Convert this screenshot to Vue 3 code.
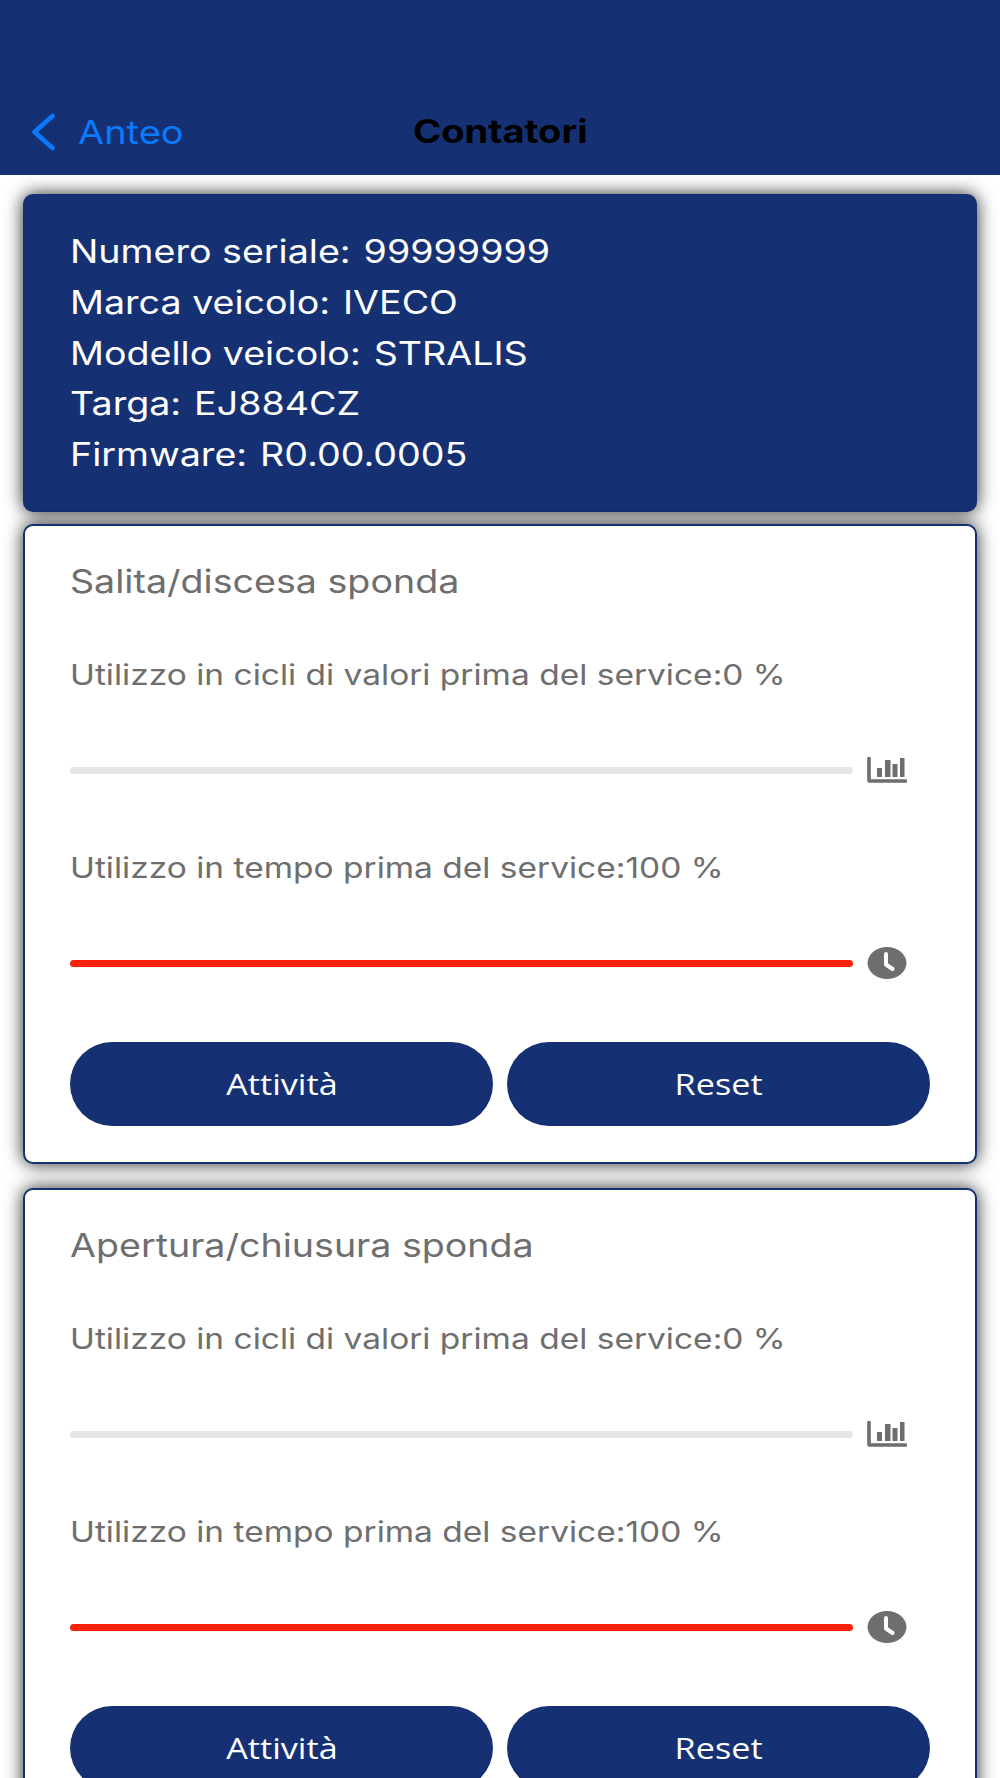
<script setup>
const info = [
  ["Numero seriale:", "99999999"],
  ["Marca veicolo:", "IVECO"],
  ["Modello veicolo:", "STRALIS"],
  ["Targa:", "EJ884CZ"],
  ["Firmware:", "R0.00.0005"],
];

const groups = ["Salita/discesa sponda", "Apertura/chiusura sponda"];
</script>

<template>
  <div class="page">
    <header class="topbar">
      <div class="back">
        <svg class="chevron" width="26" height="38" viewBox="0 0 26 38">
          <path d="M22.5 3 L4.5 19 L22.5 35" fill="none" stroke="#0a7aff" stroke-width="4.6" stroke-linecap="round" stroke-linejoin="round" />
        </svg>
        <span class="wide">Anteo</span>
      </div>
      <div class="title">Contatori</div>
    </header>

    <main class="content">
      <section class="info">
        <div v-for="row in info" :key="row[0]" class="info-row wide">
          <span>{{ row[0] }}</span>
          <span>{{ row[1] }}</span>
        </div>
      </section>

      <section v-for="(name, i) in groups" :key="name" class="card" :class="{ first: i === 0 }">
        <h2 class="wide">{{ name }}</h2>

        <p class="label wide">Utilizzo in cicli di valori prima del service:0 %</p>
        <div class="meter">
          <div class="track"></div>
          <svg width="40" height="26" viewBox="0 0 40 26">
            <path d="M2 1.5 V24 H38.5" fill="none" stroke="#6e6e6e" stroke-width="3.6" stroke-linecap="round" stroke-linejoin="round" />
            <rect x="10" y="11" width="5" height="9" fill="#6e6e6e" />
            <rect x="18" y="3" width="5.5" height="17" fill="#6e6e6e" />
            <rect x="25.5" y="7" width="5" height="13" fill="#6e6e6e" />
            <rect x="33" y="1" width="4.5" height="19" fill="#6e6e6e" />
          </svg>
        </div>

        <p class="label second wide">Utilizzo in tempo prima del service:100 %</p>
        <div class="meter">
          <div class="track full"></div>
          <svg width="40" height="32" viewBox="0 0 40 32">
            <ellipse cx="20" cy="16" rx="19.5" ry="16" fill="#6e6e6e" />
            <path d="M19 7 V17.5 L25.5 22" fill="none" stroke="#fff" stroke-width="4" stroke-linecap="round" stroke-linejoin="round" />
          </svg>
        </div>

        <div class="actions">
          <button><span class="wide-btn">Attività</span></button>
          <button><span class="wide-btn">Reset</span></button>
        </div>
      </section>
    </main>
  </div>
</template>

<style scoped>
.page {
  height: 1778px;
  overflow: hidden;
  background: #fff;
  font-family: Inter, "Liberation Sans", sans-serif;
}

/* the whole screenshot is stretched sideways, so the text is too */
.wide {
  transform: scaleX(1.175);
  transform-origin: left center;
}

.wide-btn {
  display: inline-block;
  transform: scaleX(1.14);
  position: relative;
  top: -1px;
}

.topbar {
  height: 175px;
  box-sizing: border-box;
  padding-top: 113px;
  background: #153174;
  display: flex;
  position: relative;
  justify-content: center;
}

.back {
  position: absolute;
  left: 30px;
  top: 113px;
  display: flex;
  align-items: center;
  gap: 22px;
  color: #0a7aff;
  font-size: 33px;
  line-height: 38px;
}

.back .wide {
  display: inline-block;
  transform: scaleX(1.15);
}

.title {
  color: #000;
  font-size: 32px;
  line-height: 38px;
  font-weight: 700;
  transform: scaleX(1.19);
}

.content {
  padding: 19px 23px 0;
}

.info {
  height: 318px;
  box-sizing: border-box;
  padding: 33px 47px 0;
  background: #153174;
  border-radius: 10px;
  box-shadow: 0 0 18px rgba(0, 0, 0, 0.85);
  color: #fff;
  font-size: 32px;
  line-height: 50.8px;
  position: relative;
}

.info-row {
  display: flex;
  gap: 11px;
}

.card {
  margin-top: 24px;
  height: 640px;
  box-sizing: border-box;
  padding: 37px 30px 0 45px;
  background: #fff;
  border: 2px solid #153174;
  border-radius: 10px;
  box-shadow: 0 0 18px rgba(0, 0, 0, 0.85);
  color: #6e6e6e;
  position: relative;
}

.card.first {
  margin-top: 12px;
}

h2 {
  margin: 0;
  font-size: 32px;
  line-height: 38px;
  font-weight: 400;
  transform: scaleX(1.15);
}

.label {
  margin: 57px 0 0;
  font-size: 28.5px;
  line-height: 34px;
}

.label.second {
  margin-top: 65px;
}

.meter {
  margin-top: 62px;
  height: 32px;
  display: flex;
  align-items: center;
  gap: 14px;
}

.track {
  width: 783px;
  height: 7px;
  border-radius: 4px;
  background: #e5e5e5;
}

.track.full {
  background: #fb2207;
}

.actions {
  margin-top: 63px;
  display: flex;
  gap: 14px;
}

button {
  width: 423px;
  flex: none;
  height: 84px;
  padding: 0;
  border: 0;
  border-radius: 42px;
  background: #153174;
  color: #fff;
  font-family: "Open Sans", Inter, sans-serif;
  font-size: 30px;
}
</style>
